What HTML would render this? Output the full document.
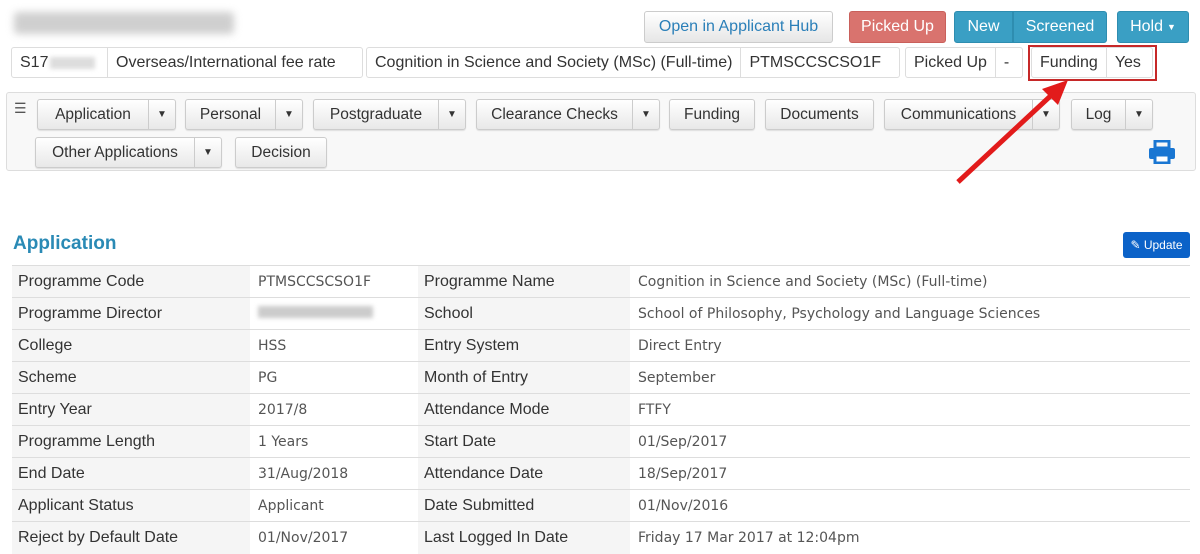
<!DOCTYPE html>
<html><head><style>
*{box-sizing:border-box;margin:0;padding:0}
body{width:1200px;height:549px;overflow:hidden;background:#fff;font-family:"Liberation Sans",sans-serif;color:#333;position:relative}
.abs{position:absolute}
.btn{position:absolute;border:1px solid #ccc;border-radius:3px;background:linear-gradient(#fff,#e6e6e6);font-size:16px;color:#333;display:flex;align-items:center;justify-content:center;height:32px}
.seg{position:absolute;top:47px;height:31px;border:1px solid #ddd;border-radius:3px;display:flex;font-size:16px;color:#333;background:#fff}
.seg span{padding:0 8px;display:flex;align-items:center;border-right:1px solid #ddd}
.seg span:last-child{border-right:none}
.nb{position:absolute;height:31px;border:1px solid #ccc;border-radius:3px;background:linear-gradient(#fff,#e8e8e8);display:flex;font-size:15.5px;color:#333;box-shadow:0 1px 1px rgba(0,0,0,.1)}
.nb span{display:flex;align-items:center;justify-content:center}
.nb i{width:27px;border-left:1px solid #ccc;display:flex;align-items:center;justify-content:center;font-style:normal;font-size:10px}
table{position:absolute;left:12px;top:265px;width:1178px;border-collapse:collapse;font-size:16px}
td{height:32px;border-top:1px solid #ddd;padding:0 6px;white-space:nowrap}
td.l{background:#f5f5f5;color:#333}
td.v{font-family:"DejaVu Sans",sans-serif;font-size:14px;color:#555;padding-left:8px}
</style></head><body>
<div class="abs" style="left:14px;top:12px;width:220px;height:22px;background:#bbb;filter:blur(4px);border-radius:4px;opacity:.7"></div>

<div class="btn" style="left:644px;top:11px;width:189px;color:#2a7fb8">Open in Applicant Hub</div>
<div class="btn" style="left:849px;top:11px;width:97px;background:#d9736e;border-color:#c9605b;color:#fff">Picked Up</div>
<div class="btn" style="left:954px;top:11px;width:59px;background:#3a9fc4;border-color:#2e8db0;color:#fff;border-radius:3px 0 0 3px">New</div>
<div class="btn" style="left:1013px;top:11px;width:94px;background:#3a9fc4;border-color:#2e8db0;color:#fff;border-radius:0 3px 3px 0">Screened</div>
<div class="btn" style="left:1117px;top:11px;width:72px;background:#3a9fc4;border-color:#2e8db0;color:#fff">Hold <span style="font-size:9px;margin-left:4px">▼</span></div>

<div class="seg" style="left:11px;width:352px"><span style="width:96px">S17<b style="display:inline-block;width:45px;height:12px;background:#ddd;filter:blur(2px);margin-left:2px"></b></span><span>Overseas/International fee rate</span></div>
<div class="seg" style="left:366px;width:534px"><span>Cognition in Science and Society (MSc) (Full-time)</span><span>PTMSCCSCSO1F</span></div>
<div class="seg" style="left:905px;width:118px"><span>Picked Up</span><span>-</span></div>
<div class="seg" style="left:1031px;width:122px"><span>Funding</span><span>Yes</span></div>
<div class="abs" style="left:1028px;top:45px;width:129px;height:36px;border:2px solid #c62828"></div>

<div class="abs" style="left:6px;top:92px;width:1190px;height:79px;border:1px solid #ddd;border-radius:3px;background:#f8f8f8"></div>
<div class="abs" style="left:14px;top:100px;font-size:14px;color:#555">☰</div>
<div class="nb" style="left:37px;top:99px"><span style="width:110px">Application</span><i>▼</i></div>
<div class="nb" style="left:185px;top:99px"><span style="width:89px">Personal</span><i>▼</i></div>
<div class="nb" style="left:313px;top:99px"><span style="width:124px">Postgraduate</span><i>▼</i></div>
<div class="nb" style="left:476px;top:99px"><span style="width:155px">Clearance Checks</span><i>▼</i></div>
<div class="nb" style="left:669px;top:99px"><span style="width:84px">Funding</span></div>
<div class="nb" style="left:765px;top:99px"><span style="width:107px">Documents</span></div>
<div class="nb" style="left:884px;top:99px"><span style="width:147px">Communications</span><i>▼</i></div>
<div class="nb" style="left:1071px;top:99px"><span style="width:53px">Log</span><i>▼</i></div>
<div class="nb" style="left:35px;top:137px"><span style="width:158px">Other Applications</span><i>▼</i></div>
<div class="nb" style="left:235px;top:137px"><span style="width:90px">Decision</span></div>
<svg class="abs" style="left:1148px;top:140px" width="28" height="24" viewBox="0 0 28 24"><rect x="7" y="1" width="14" height="7" fill="none" stroke="#1976d2" stroke-width="3"/><rect x="1" y="8" width="26" height="11" rx="2" fill="#1976d2"/><rect x="7" y="15" width="14" height="8" fill="#fff" stroke="#1976d2" stroke-width="3"/></svg>

<svg class="abs" style="left:950px;top:75px" width="130" height="115"><line x1="8" y1="107" x2="108" y2="14" stroke="#e21b1b" stroke-width="5"/><polygon points="118,5 92,14 108,30" fill="#e21b1b"/></svg>

<div class="abs" style="left:13px;top:233px;font-size:19px;font-weight:bold;color:#2a8ab5">Application</div>
<div class="abs" style="left:1123px;top:232px;width:67px;height:26px;background:#0b62c8;border-radius:3px;color:#fff;font-size:12px;display:flex;align-items:center;justify-content:center">✎ Update</div>

<table>
<colgroup><col style="width:238px"><col style="width:168px"><col style="width:212px"><col></colgroup>
<tr><td class="l">Programme Code</td><td class="v">PTMSCCSCSO1F</td><td class="l">Programme Name</td><td class="v">Cognition in Science and Society (MSc) (Full-time)</td></tr>
<tr><td class="l">Programme Director</td><td class="v"><b style="display:inline-block;width:115px;height:12px;background:#ccc;filter:blur(2px)"></b></td><td class="l">School</td><td class="v">School of Philosophy, Psychology and Language Sciences</td></tr>
<tr><td class="l">College</td><td class="v">HSS</td><td class="l">Entry System</td><td class="v">Direct Entry</td></tr>
<tr><td class="l">Scheme</td><td class="v">PG</td><td class="l">Month of Entry</td><td class="v">September</td></tr>
<tr><td class="l">Entry Year</td><td class="v">2017/8</td><td class="l">Attendance Mode</td><td class="v">FTFY</td></tr>
<tr><td class="l">Programme Length</td><td class="v">1 Years</td><td class="l">Start Date</td><td class="v">01/Sep/2017</td></tr>
<tr><td class="l">End Date</td><td class="v">31/Aug/2018</td><td class="l">Attendance Date</td><td class="v">18/Sep/2017</td></tr>
<tr><td class="l">Applicant Status</td><td class="v">Applicant</td><td class="l">Date Submitted</td><td class="v">01/Nov/2016</td></tr>
<tr><td class="l">Reject by Default Date</td><td class="v">01/Nov/2017</td><td class="l">Last Logged In Date</td><td class="v">Friday 17 Mar 2017 at 12:04pm</td></tr>
</table>
</body></html>
